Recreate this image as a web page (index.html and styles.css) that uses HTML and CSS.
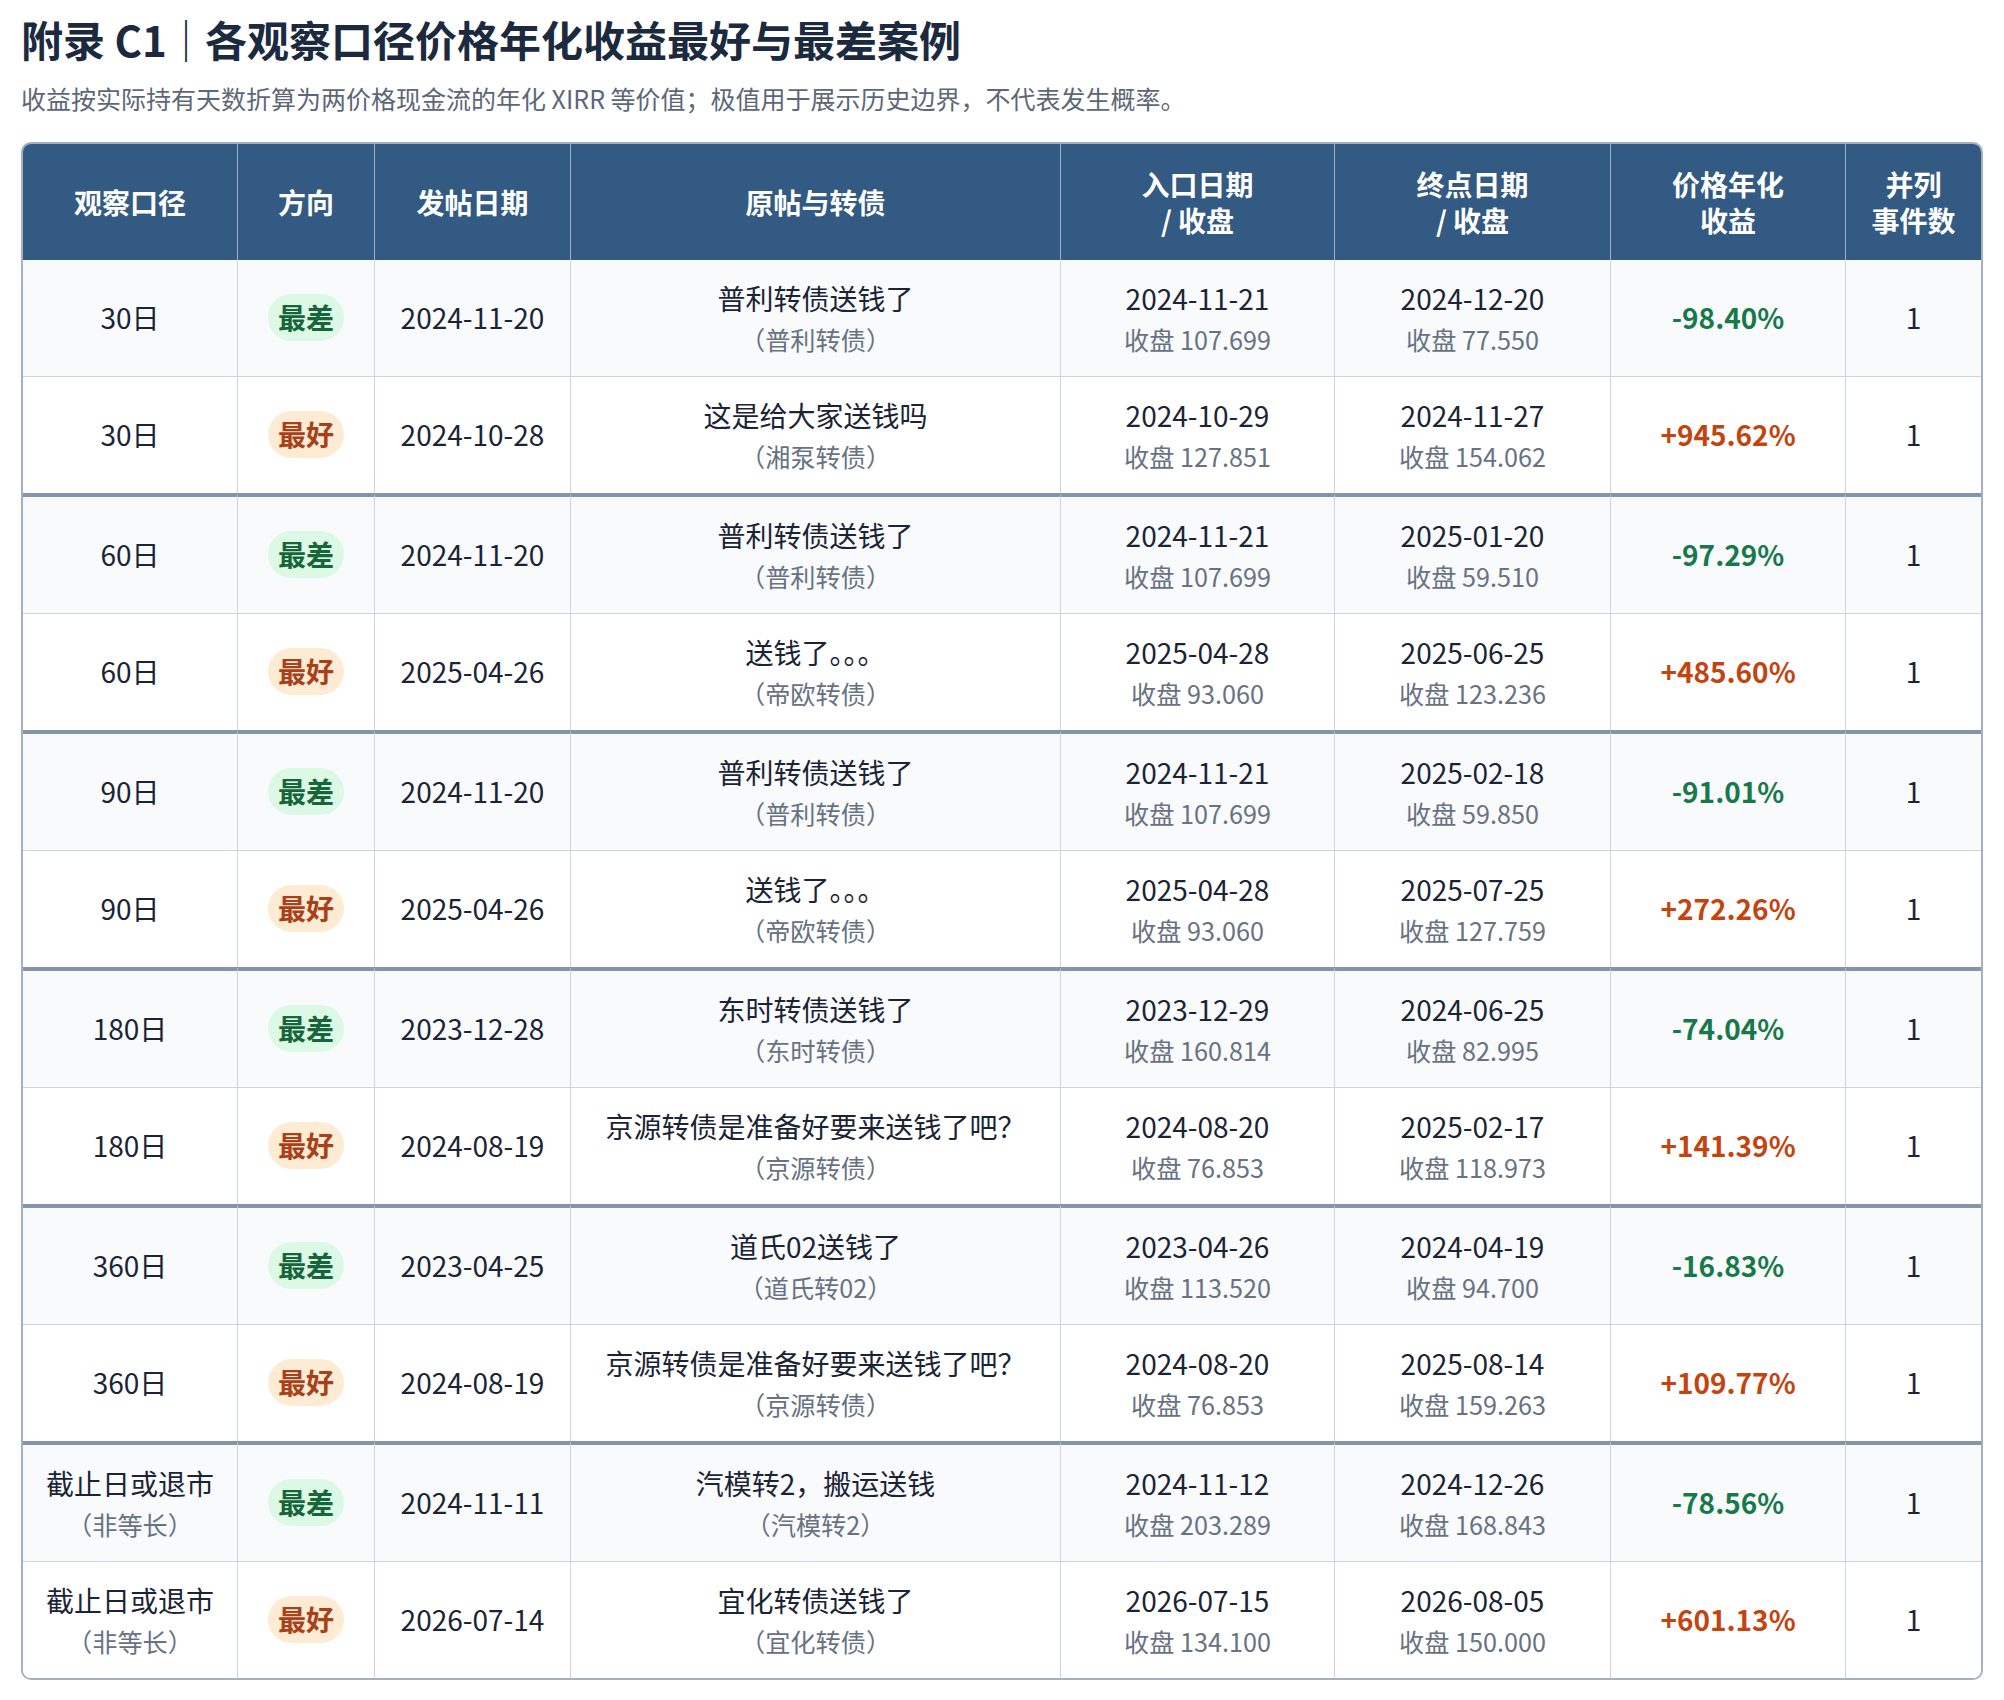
FILE: index.html
```html
<!DOCTYPE html>
<html lang="zh-CN">
<head>
<meta charset="utf-8">
<title>附录 C1</title>
<link rel="stylesheet" href="styles.css">
</head>
<body>
<h1 class="title">附录 C1<span class="sep">｜</span>各观察口径价格年化收益最好与最差案例</h1>
<p class="subtitle">收益按实际持有天数折算为两价格现金流的年化 XIRR 等价值；极值用于展示历史边界，不代表发生概率。</p>
<div class="table-wrap">
<table class="cases">
<colgroup>
<col class="c1"><col class="c2"><col class="c3"><col class="c4"><col class="c5"><col class="c6"><col class="c7"><col class="c8">
</colgroup>
<thead>
<tr>
<th>观察口径</th><th>方向</th><th>发帖日期</th><th>原帖与转债</th><th>入口日期<br>/ 收盘</th><th>终点日期<br>/ 收盘</th><th>价格年化<br>收益</th><th class="last">并列<br>事件数</th>
</tr>
</thead>
<tbody>
<tr class="worst">
<td>30日</td><td><span class="badge bad">最差</span></td><td>2024-11-20</td>
<td><div class="main">普利转债送钱了</div><div class="sub">（普利转债）</div></td>
<td><div class="main">2024-11-21</div><div class="sub">收盘 107.699</div></td>
<td><div class="main">2024-12-20</div><div class="sub">收盘 77.550</div></td>
<td class="pct neg">-98.40%</td><td class="last">1</td>
</tr>
<tr class="best group-end">
<td>30日</td><td><span class="badge good">最好</span></td><td>2024-10-28</td>
<td><div class="main">这是给大家送钱吗</div><div class="sub">（湘泵转债）</div></td>
<td><div class="main">2024-10-29</div><div class="sub">收盘 127.851</div></td>
<td><div class="main">2024-11-27</div><div class="sub">收盘 154.062</div></td>
<td class="pct pos">+945.62%</td><td class="last">1</td>
</tr>
<tr class="worst">
<td>60日</td><td><span class="badge bad">最差</span></td><td>2024-11-20</td>
<td><div class="main">普利转债送钱了</div><div class="sub">（普利转债）</div></td>
<td><div class="main">2024-11-21</div><div class="sub">收盘 107.699</div></td>
<td><div class="main">2025-01-20</div><div class="sub">收盘 59.510</div></td>
<td class="pct neg">-97.29%</td><td class="last">1</td>
</tr>
<tr class="best group-end">
<td>60日</td><td><span class="badge good">最好</span></td><td>2025-04-26</td>
<td><div class="main">送钱了。。。</div><div class="sub">（帝欧转债）</div></td>
<td><div class="main">2025-04-28</div><div class="sub">收盘 93.060</div></td>
<td><div class="main">2025-06-25</div><div class="sub">收盘 123.236</div></td>
<td class="pct pos">+485.60%</td><td class="last">1</td>
</tr>
<tr class="worst">
<td>90日</td><td><span class="badge bad">最差</span></td><td>2024-11-20</td>
<td><div class="main">普利转债送钱了</div><div class="sub">（普利转债）</div></td>
<td><div class="main">2024-11-21</div><div class="sub">收盘 107.699</div></td>
<td><div class="main">2025-02-18</div><div class="sub">收盘 59.850</div></td>
<td class="pct neg">-91.01%</td><td class="last">1</td>
</tr>
<tr class="best group-end">
<td>90日</td><td><span class="badge good">最好</span></td><td>2025-04-26</td>
<td><div class="main">送钱了。。。</div><div class="sub">（帝欧转债）</div></td>
<td><div class="main">2025-04-28</div><div class="sub">收盘 93.060</div></td>
<td><div class="main">2025-07-25</div><div class="sub">收盘 127.759</div></td>
<td class="pct pos">+272.26%</td><td class="last">1</td>
</tr>
<tr class="worst">
<td>180日</td><td><span class="badge bad">最差</span></td><td>2023-12-28</td>
<td><div class="main">东时转债送钱了</div><div class="sub">（东时转债）</div></td>
<td><div class="main">2023-12-29</div><div class="sub">收盘 160.814</div></td>
<td><div class="main">2024-06-25</div><div class="sub">收盘 82.995</div></td>
<td class="pct neg">-74.04%</td><td class="last">1</td>
</tr>
<tr class="best group-end">
<td>180日</td><td><span class="badge good">最好</span></td><td>2024-08-19</td>
<td><div class="main">京源转债是准备好要来送钱了吧？</div><div class="sub">（京源转债）</div></td>
<td><div class="main">2024-08-20</div><div class="sub">收盘 76.853</div></td>
<td><div class="main">2025-02-17</div><div class="sub">收盘 118.973</div></td>
<td class="pct pos">+141.39%</td><td class="last">1</td>
</tr>
<tr class="worst">
<td>360日</td><td><span class="badge bad">最差</span></td><td>2023-04-25</td>
<td><div class="main">道氏02送钱了</div><div class="sub">（道氏转02）</div></td>
<td><div class="main">2023-04-26</div><div class="sub">收盘 113.520</div></td>
<td><div class="main">2024-04-19</div><div class="sub">收盘 94.700</div></td>
<td class="pct neg">-16.83%</td><td class="last">1</td>
</tr>
<tr class="best group-end">
<td>360日</td><td><span class="badge good">最好</span></td><td>2024-08-19</td>
<td><div class="main">京源转债是准备好要来送钱了吧？</div><div class="sub">（京源转债）</div></td>
<td><div class="main">2024-08-20</div><div class="sub">收盘 76.853</div></td>
<td><div class="main">2025-08-14</div><div class="sub">收盘 159.263</div></td>
<td class="pct pos">+109.77%</td><td class="last">1</td>
</tr>
<tr class="worst">
<td><div class="main">截止日或退市</div><div class="sub">（非等长）</div></td><td><span class="badge bad">最差</span></td><td>2024-11-11</td>
<td><div class="main">汽模转2，搬运送钱</div><div class="sub">（汽模转2）</div></td>
<td><div class="main">2024-11-12</div><div class="sub">收盘 203.289</div></td>
<td><div class="main">2024-12-26</div><div class="sub">收盘 168.843</div></td>
<td class="pct neg">-78.56%</td><td class="last">1</td>
</tr>
<tr class="best final">
<td><div class="main">截止日或退市</div><div class="sub">（非等长）</div></td><td><span class="badge good">最好</span></td><td>2026-07-14</td>
<td><div class="main">宜化转债送钱了</div><div class="sub">（宜化转债）</div></td>
<td><div class="main">2026-07-15</div><div class="sub">收盘 134.100</div></td>
<td><div class="main">2026-08-05</div><div class="sub">收盘 150.000</div></td>
<td class="pct pos">+601.13%</td><td class="last">1</td>
</tr>
</tbody>
</table>
</div>
</body>
</html>
```
FILE: styles.css
```css
html, body {
  margin: 0;
  padding: 0;
  background: #ffffff;
}
body {
  padding: 11px 21px 20px 21px;
  font-family: "Noto Sans CJK SC", "Noto Sans", sans-serif;
  color: #1b2435;
}
.title {
  margin: 0;
  font-size: 42px;
  line-height: 56px;
  font-weight: 700;
  color: #1c2a40;
}
.title .sep {
  font-weight: 400;
  color: #1c2a40;
  margin: 0 -2px;
}
.subtitle {
  margin: 14px 0 0 0;
  font-size: 25px;
  line-height: 34px;
  color: #5d6777;
}
.table-wrap {
  margin-top: 27px;
  width: 1958px;
  border: 2px solid #a4b0c0;
  border-radius: 10px;
  overflow: hidden;
}
.cases {
  width: 1958px;
  table-layout: fixed;
  border-collapse: separate;
  border-spacing: 0;
}
.c1 { width: 215px; }
.c2 { width: 137px; }
.c3 { width: 196px; }
.c4 { width: 490px; }
.c5 { width: 274px; }
.c6 { width: 276px; }
.c7 { width: 235px; }
.c8 { width: 135px; }
.cases th {
  background: #335a83;
  color: #ffffff;
  font-size: 28px;
  font-weight: 700;
  line-height: 36px;
  padding: 22px 8px;
  text-align: center;
  vertical-align: middle;
  border-right: 1px solid #9fb1c6;
}
.cases th.last,
.cases td.last {
  border-right: none;
}
.cases td {
  font-size: 28px;
  line-height: 42px;
  padding: 16px 8px 18px;
  height: 82px;
  text-align: center;
  vertical-align: middle;
  border-right: 1px solid #cbd4df;
  border-top: 1px solid #cbd4df;
  color: #1b2435;
}
.cases tbody tr:first-child td {
  border-top: none;
}
.cases tr.worst td {
  background: #f8fafc;
}
.cases tr.best td {
  background: #ffffff;
}
.cases tr.group-end + tr td {
  border-top: 4px solid #8295ab;
}
.cases td .main {
  line-height: 44px;
}
.cases td .sub {
  font-size: 25.2px;
  line-height: 38px;
  color: #677282;
}
.badge {
  display: inline-block;
  font-size: 28px;
  font-weight: 700;
  line-height: 36px;
  padding: 5px 10px 6px;
  border-radius: 24px;
}
.badge.bad {
  background: #dcf9e5;
  color: #17653a;
}
.badge.good {
  background: #fdebd4;
  color: #a8411a;
}
.pct {
  font-weight: 700;
}
.pct.neg { color: #17794a; }
.pct.pos { color: #c4440f; }
```
